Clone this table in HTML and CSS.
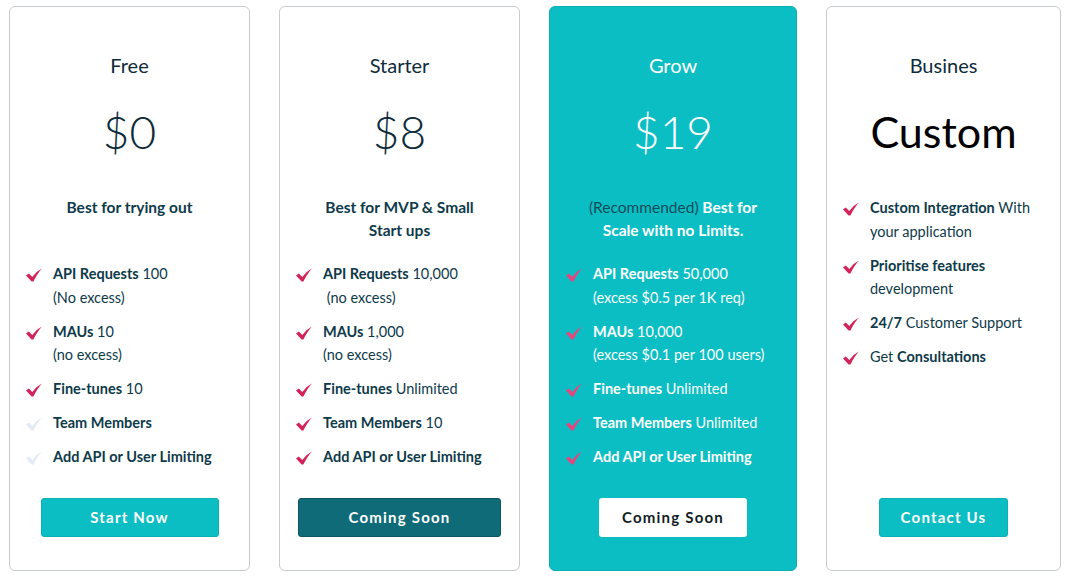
FILE: index.html
```html
<!DOCTYPE html>
<html lang="en">

<head>
    <meta charset="UTF-8">
    <meta name="viewport" content="width=device-width, initial-scale=1.0">
    <title>Pricing</title>
    <link rel="stylesheet" href="styles.css">
</head>

<body>
    <svg width="0" height="0" class="defs">
        <symbol id="check" viewBox="0 0 16 14">
            <path d="M0 7.4 L2.8 5.6 L6.3 8.9 Q10 3.6 16 0.6 Q11.6 5.2 7.4 13.6 L5.6 13.6 Z" />
        </symbol>
    </svg>

    <div class="plans">
        <!-- Free -->
        <div class="plan plan_free">
            <h2 class="plan_name">Free</h2>
            <div class="plan_price">$0</div>
            <p class="plan_desc">Best for trying out</p>
            <ul class="features">
                <li><svg class="tick"><use href="#check" /></svg><span><b>API Requests</b> 100<br>(No excess)</span></li>
                <li><svg class="tick"><use href="#check" /></svg><span><b>MAUs</b> 10<br>(no excess)</span></li>
                <li><svg class="tick"><use href="#check" /></svg><span><b>Fine-tunes</b> 10</span></li>
                <li class="off"><svg class="tick"><use href="#check" /></svg><span><b>Team Members</b></span></li>
                <li class="off"><svg class="tick"><use href="#check" /></svg><span><b>Add API or User Limiting</b></span></li>
            </ul>
            <a href="javascript:;" class="btn btn_start">Start Now</a>
        </div>

        <!-- Starter -->
        <div class="plan plan_starter">
            <h2 class="plan_name">Starter</h2>
            <div class="plan_price">$8</div>
            <p class="plan_desc">Best for MVP &amp; Small<br>Start ups</p>
            <ul class="features">
                <li><svg class="tick"><use href="#check" /></svg><span><b>API Requests</b> 10,000<br>&nbsp;(no excess)</span></li>
                <li><svg class="tick"><use href="#check" /></svg><span><b>MAUs</b> 1,000<br>(no excess)</span></li>
                <li><svg class="tick"><use href="#check" /></svg><span><b>Fine-tunes</b> Unlimited</span></li>
                <li><svg class="tick"><use href="#check" /></svg><span><b>Team Members</b> 10</span></li>
                <li><svg class="tick"><use href="#check" /></svg><span><b>Add API or User Limiting</b></span></li>
            </ul>
            <a href="javascript:;" class="btn btn_dark">Coming Soon</a>
        </div>

        <!-- Grow (recommended) -->
        <div class="plan plan_grow">
            <h2 class="plan_name">Grow</h2>
            <div class="plan_price">$19</div>
            <p class="plan_desc"><span class="tag">(Recommended)</span> Best for<br>Scale with no Limits.</p>
            <ul class="features">
                <li><svg class="tick"><use href="#check" /></svg><span><b>API Requests</b> 50,000<br>(excess $0.5 per 1K req)</span></li>
                <li><svg class="tick"><use href="#check" /></svg><span><b>MAUs</b> 10,000<br>(excess $0.1 per 100 users)</span></li>
                <li><svg class="tick"><use href="#check" /></svg><span><b>Fine-tunes</b> Unlimited</span></li>
                <li><svg class="tick"><use href="#check" /></svg><span><b>Team Members</b> Unlimited</span></li>
                <li><svg class="tick"><use href="#check" /></svg><span><b>Add API or User Limiting</b></span></li>
            </ul>
            <a href="javascript:;" class="btn btn_light">Coming Soon</a>
        </div>

        <!-- Business -->
        <div class="plan plan_business">
            <h2 class="plan_name">Busines</h2>
            <div class="plan_price plan_custom">Custom</div>
            <ul class="features features_top">
                <li><svg class="tick"><use href="#check" /></svg><span><b>Custom Integration</b> With<br>your application</span></li>
                <li><svg class="tick"><use href="#check" /></svg><span><b>Prioritise features</b><br>development</span></li>
                <li><svg class="tick"><use href="#check" /></svg><span><b>24/7</b> Customer Support</span></li>
                <li><svg class="tick"><use href="#check" /></svg><span>Get <b>Consultations</b></span></li>
            </ul>
            <a href="javascript:;" class="btn btn_contact">Contact Us</a>
        </div>
    </div>
</body>

</html>
```

FILE: styles.css
```css
* {
    margin: 0px;
    padding: 0px;
    box-sizing: border-box;
}

ul {
    list-style: none;
}

a {
    text-decoration: none;
}

body {
    font-family: Lato, "Noto Sans", sans-serif;
    color: #0e3a4a;
    background-color: #fff;
}

.defs {
    position: absolute;
}

.plans {
    display: flex;
    gap: 29px;
    padding: 6px 9px 10px;
}


/* -------------------------卡片------------------------- */
.plan {
    height: 565px;
    display: flex;
    flex-direction: column;
    align-items: center;
    padding: 44px 16px 33px;
    border: 1px solid #c4ccd1;
    border-radius: 6px;
    background-color: #fff;
}

.plan_free,
.plan_starter {
    width: 241px;
}

.plan_grow {
    width: 248px;
    background-color: #0bbec3;
    border-color: #0aaeb3;
    color: #fff;
}

.plan_business {
    width: 235px;
}

.plan_name {
    font-size: 20px;
    line-height: 28px;
    font-weight: 400;
    color: #0d2b3b;
}

.plan_grow .plan_name {
    color: #fff;
}

.plan_price {
    margin-top: 25px;
    font-size: 46px;
    line-height: 56px;
    font-weight: 300;
    color: #0d2b3b;
}

.plan_grow .plan_price {
    color: #fff;
}

.plan_custom {
    font-size: 43px;
    font-weight: 400;
    color: #000;
}

.plan_desc {
    margin-top: 36px;
    min-height: 46px;
    font-size: 15.5px;
    line-height: 23px;
    font-weight: 700;
    text-align: center;
}

.plan_grow .tag {
    font-weight: 400;
    color: #0d4d5c;
}


/* -------------------------功能列表------------------------- */
.features {
    align-self: stretch;
    margin-top: 20px;
    display: flex;
    flex-direction: column;
    gap: 10.5px;
    font-size: 14.5px;
    line-height: 23.5px;
}

.features_top {
    margin-top: 36px;
}

.features li {
    display: flex;
    align-items: flex-start;
    gap: 11px;
}

.features b {
    font-weight: 700;
}

.tick {
    flex: none;
    width: 16px;
    height: 14px;
    margin-top: 6px;
    fill: #d3245a;
}

.plan_grow .tick {
    fill: #e9457c;
}

.features .off .tick {
    fill: #e2ebf3;
}


/* -------------------------按钮------------------------- */
.btn {
    margin-top: auto;
    height: 39px;
    line-height: 37px;
    border: 1px solid transparent;
    border-radius: 3px;
    font-size: 15px;
    font-weight: 700;
    letter-spacing: 1.2px;
    text-align: center;
    color: #fff;
}

.btn_start {
    width: 178px;
    background-color: #0bbec3;
    border-color: #0ab0b5;
}

.btn_dark {
    width: 203px;
    background-color: #0f6b78;
    border-color: #0b5661;
}

.btn_light {
    width: 148px;
    background-color: #fff;
    color: #111d24;
}

.btn_contact {
    width: 129px;
    background-color: #0bbec3;
    border-color: #0ab0b5;
}
```
